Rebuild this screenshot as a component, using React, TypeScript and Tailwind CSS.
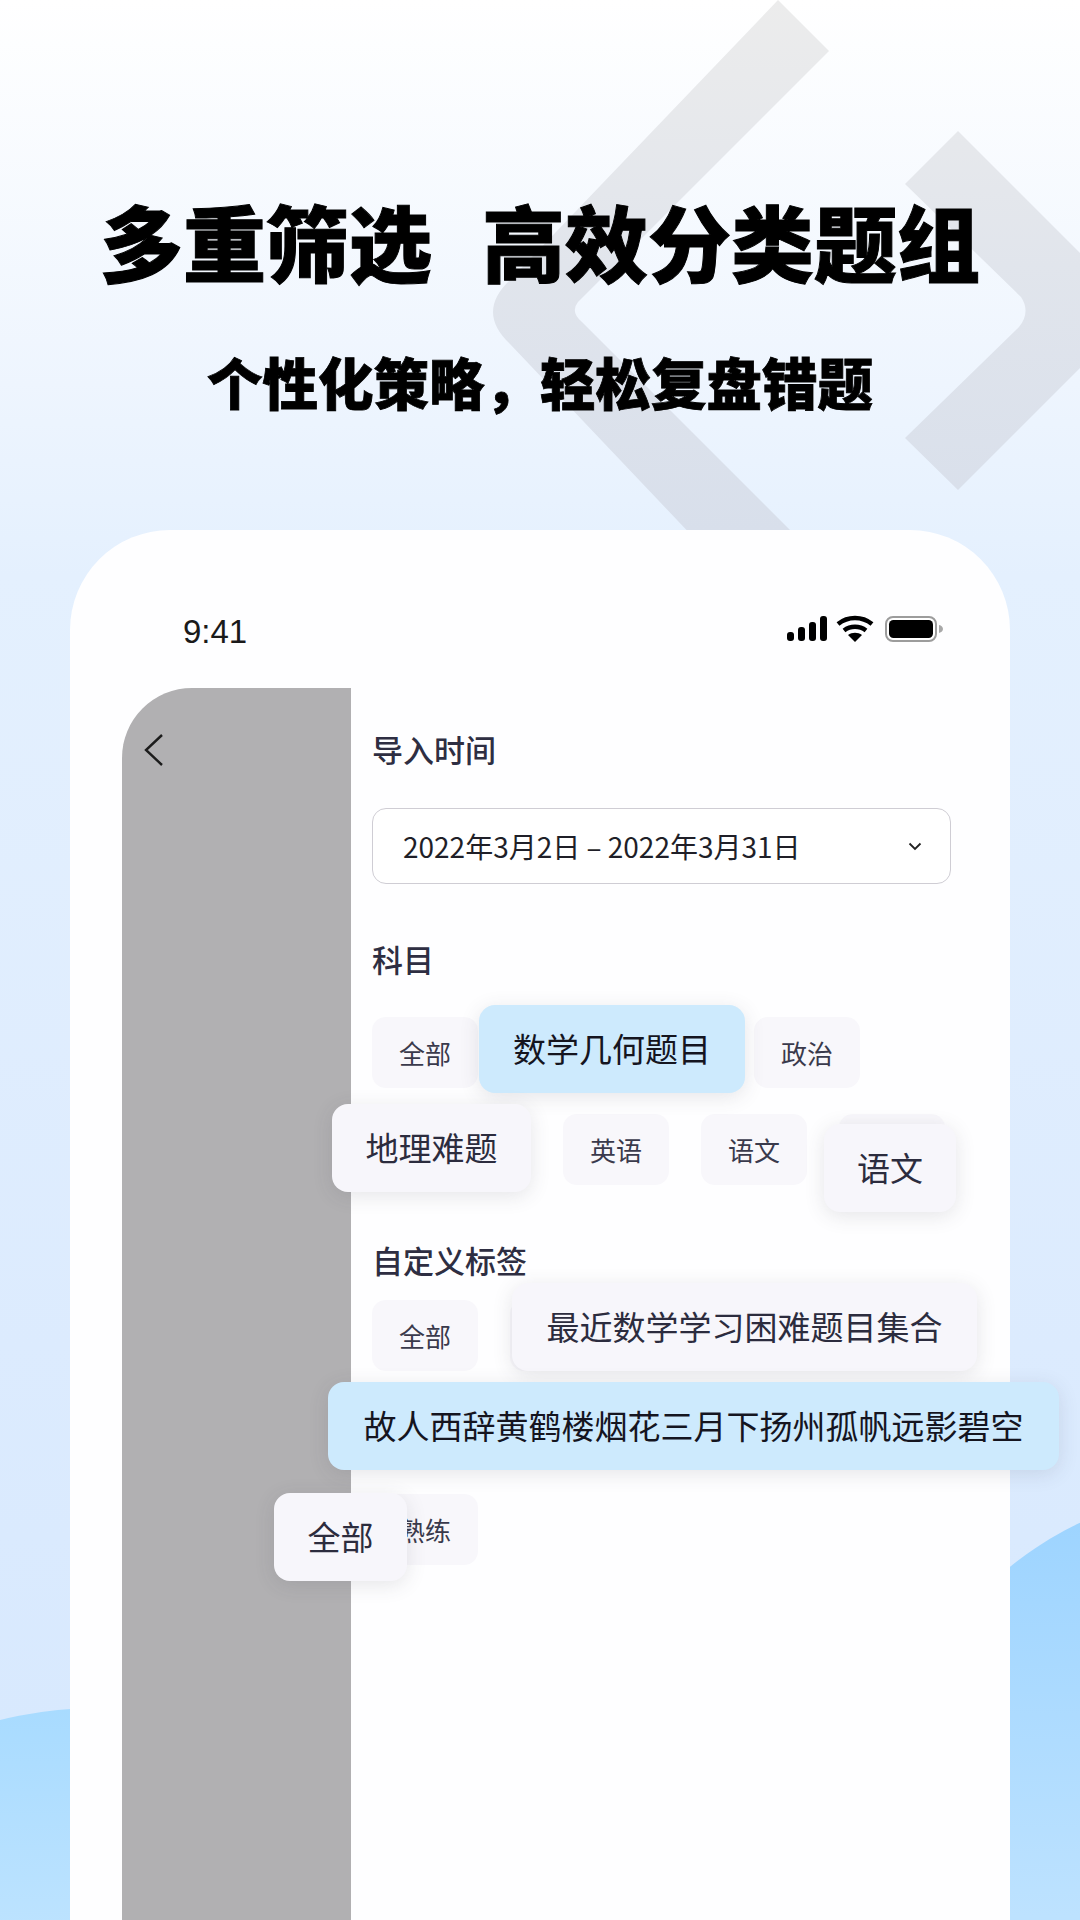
import React from "react";

const CJK = "font-['Noto_Sans_CJK_SC',sans-serif]";

function Chip({ children, width }: { children?: React.ReactNode; width?: string }) {
  return (
    <div className={`flex h-[71px] items-center justify-center rounded-[14px] bg-[#f8f7fb] text-[26px] text-[#3a3a4c] ${width ?? "w-[106px]"}`}>
      {children}
    </div>
  );
}

function FloatChip({ label, className, blue }: { label: string; className: string; blue?: boolean }) {
  return (
    <div
      className={`absolute flex h-[88px] items-center justify-center whitespace-nowrap rounded-[16px] text-[33px] shadow-[0_4px_20px_rgba(60,60,80,0.13)] ${
        blue ? "bg-[#cdeafd] text-[#15151f]" : "bg-[#f7f6fb] text-[#2c2c3e]"
      } ${className}`}
    >
      {label}
    </div>
  );
}

function SectionTitle({ children }: { children: React.ReactNode }) {
  return <div className="text-[31px] leading-[40px] font-medium text-[#2e2e42]">{children}</div>;
}

function StatusIcons() {
  return (
    <svg width="158" height="30" viewBox="0 0 158 30" className="block">
      <g fill="#000">
        <rect x="1" y="17" width="7" height="9" rx="3" />
        <rect x="12" y="12" width="7" height="14" rx="3" />
        <rect x="23" y="7" width="7" height="19" rx="3" />
        <rect x="34" y="1" width="7" height="25" rx="3" />
        <path d="M69 27 62 20c4-3 10-3 14 0Z" />
      </g>
      <g fill="none" stroke="#000" strokeWidth="4.500">
        <path d="M52 9c10-8 24-8 34 0" />
        <path d="M58 15.500c6.500-5 15.500-5 22 0" />
      </g>
      <rect x="100" y="2" width="50" height="24" rx="7" fill="#fff" stroke="#9c9c9c" strokeWidth="2" />
      <rect x="103" y="5" width="44" height="18" rx="4.500" fill="#000" />
      <path d="M153 10c2.500.6 4 2.200 4 4s-1.500 3.400-4 4Z" fill="#a8a8a8" />
    </svg>
  );
}

export default function App() {
  return (
    <div className={`relative h-[1920px] w-[1080px] overflow-hidden bg-[linear-gradient(180deg,#ffffff_0%,#eef5fe_20%,#e4f0fe_30%,#dcebfe_70%,#d6e8fe_100%)] ${CJK}`}>
      {/* watermark chevrons */}
      <svg className="absolute top-0 left-0" width="1080" height="540" viewBox="0 0 1080 540">
        <defs>
          <linearGradient id="mark" gradientUnits="userSpaceOnUse" x1="0" y1="0" x2="0" y2="530">
            <stop offset="0" stopColor="#ececec" />
            <stop offset="0.5" stopColor="#e1e5ec" />
            <stop offset="1" stopColor="#d8dfeb" />
          </linearGradient>
        </defs>
        <path fill="url(#mark)" d="M778 0 510 280Q476 312 510 344L696 540H800L582 322Q570 312 578 302L829 51Z" />
        <path fill="url(#mark)" d="M958 131 1080 253V368L958 490 905 438 1019 327Q1031 312 1021 297L905 184Z" />
      </svg>

      {/* bottom blobs */}
      <div className="absolute top-[1489px] left-[880px] h-[700px] w-[700px] rounded-full bg-[linear-gradient(180deg,#9bd3ff_0%,#bde2ff_61%)]" />
      <div className="absolute top-[1708px] left-[-303px] h-[800px] w-[800px] rounded-full bg-[linear-gradient(180deg,#a8dbff_0%,#bde3ff_28%)]" />

      <div className="relative flex h-full flex-col items-center">
        <div className="mt-[192px] flex h-[96px] items-center text-[83px] leading-[96px] font-black whitespace-nowrap text-black [-webkit-text-stroke:1px_#000]">
          <span>多重筛选</span>
          <span className="ml-[50px]">高效分类题组</span>
        </div>
        <div className="mt-[61px] h-[64px] text-[55.5px] leading-[64px] font-black whitespace-nowrap text-black [-webkit-text-stroke:0.8px_#000]">
          个性化策略，轻松复盘错题
        </div>

        {/* phone */}
        <div className="relative mt-[117px] flex w-[940px] flex-1 flex-col rounded-t-[100px] bg-[#fefeff]">
          <div className="flex h-[158px] items-start justify-between pt-[80px] pr-[66px] pl-[113px]">
            <span className="font-['Liberation_Sans',sans-serif] text-[33px] leading-[44px] text-[#1a1a1a]">9:41</span>
            <div className="mt-[5px]"><StatusIcons /></div>
          </div>
          <div className="flex flex-1 pl-[52px]">
            <div className="w-[229px] rounded-tl-[70px] bg-[#b1b0b2] pt-[46px] pl-[22px]">
              <svg width="20" height="32" viewBox="0 0 20 32" fill="none" stroke="#1c1c1c" strokeWidth="2.400">
                <path d="M18 1 2 16l16 15" />
              </svg>
            </div>
            <div className="w-[600px] pt-[41px] pl-[21px]">
              <SectionTitle>导入时间</SectionTitle>
              <div className="mt-[39px] flex h-[76px] items-center justify-between rounded-[14px] border border-[#cfcdd4] bg-white pr-[28px] pl-[30px]">
                <span className="text-[28px] text-[#1f1f28]">2022年3月2日 – 2022年3月31日</span>
                <svg width="14" height="9" viewBox="0 0 14 9" fill="none" stroke="#222" strokeWidth="1.800">
                  <path d="m1.500 1.500 5.500 5.500 5.500-5.500" />
                </svg>
              </div>

              <div className="mt-[55px]"><SectionTitle>科目</SectionTitle></div>
              <div className="mt-[38px] flex flex-wrap gap-x-[32px] gap-y-[26px]">
                <Chip>全部</Chip>
                <Chip width="w-[212px]" />
                <Chip>政治</Chip>
                <Chip width="w-[159px]" />
                <Chip>英语</Chip>
                <Chip>语文</Chip>
                <Chip />
              </div>

              <div className="mt-[55px]"><SectionTitle>自定义标签</SectionTitle></div>
              <div className="mt-[20px] flex flex-wrap gap-x-[32px] gap-y-[26px]">
                <Chip>全部</Chip>
                <Chip width="w-[364px]" />
                <Chip width="w-[572px]" />
                <Chip>熟练</Chip>
              </div>
            </div>
          </div>

          {/* enlarged chips laid over the list */}
          <FloatChip blue label="数学几何题目" className="top-[475px] left-[409px] w-[266px]" />
          <FloatChip label="地理难题" className="top-[574px] left-[262px] w-[199px]" />
          <FloatChip label="语文" className="top-[594px] left-[754px] w-[132px]" />
          <FloatChip label="最近数学学习困难题目集合" className="top-[753px] left-[442px] w-[465px]" />
          <FloatChip blue label="故人西辞黄鹤楼烟花三月下扬州孤帆远影碧空" className="top-[852px] left-[258px] w-[731px]" />
          <FloatChip label="全部" className="top-[963px] left-[204px] w-[133px]" />
        </div>
      </div>
    </div>
  );
}
